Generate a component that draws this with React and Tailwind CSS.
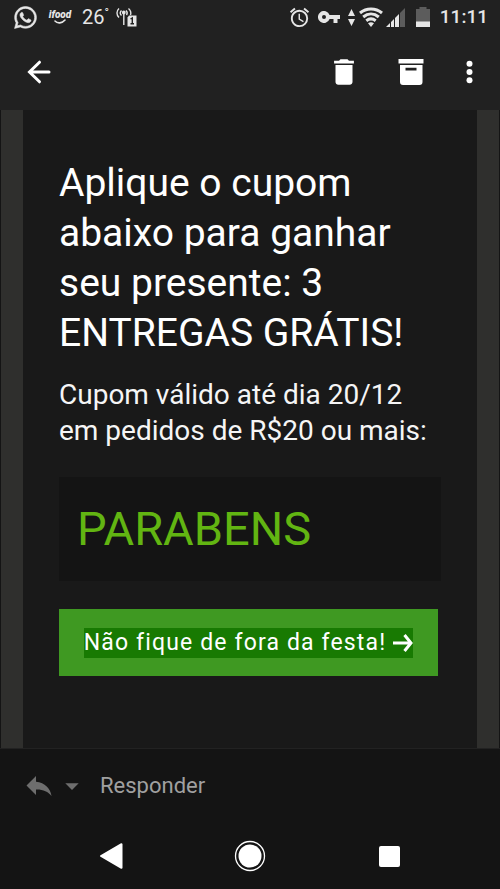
import React from 'react';
import { FaWhatsapp } from 'react-icons/fa';
import { MdAlarm, MdArrowDropDown, MdDelete } from 'react-icons/md';

function StatusBar() {
  return (
    <div className="flex h-9 items-center justify-between pb-[2px] pl-[13px] pr-3 text-[#e6e6e6]">
      <div className="flex items-center gap-[10px]">
        <FaWhatsapp size={25} stroke="currentColor" strokeWidth="12" />
        <div className="flex w-[24px] flex-col items-center">
          <span className="text-[10px] font-black italic leading-[8px]">ifood</span>
          <svg width="12" height="5" viewBox="0 0 12 5" fill="none" stroke="currentColor" strokeWidth="1.600" strokeLinecap="round">
            <path d="M1 2C3.500 4.800 8 4.500 11 1" />
          </svg>
        </div>
        <span className="flex w-[24px] text-[20px] leading-6">26<span className="text-xs leading-4">°</span></span>
        <svg width="21" height="20" viewBox="0 0 21 20" fill="none" stroke="currentColor" strokeWidth="1.400">
          <path d="M3 1.500C0.300 4 0.300 8 3 10.500M5.500 3.500C4 5 4 7 5.500 8.500M12.500 1.500C15.200 4 15.200 6 14.500 8M10 3.500C11.500 5 11.500 6.500 10.500 8M7.800 6V18" />
          <circle cx="7.800" cy="5.500" r="1.200" fill="currentColor" />
          <path d="M13 8.500H20.500V19.500H11.500V10.500Z" fill="currentColor" stroke="none" />
          <path d="M14.500 12L16.300 11V16.500M14.500 16.700H18" stroke="#212121" />
        </svg>
      </div>
      <div className="flex items-center">
        <MdAlarm size={23} className="mr-[7px]" />
        <svg className="mr-2" width="22" height="12" viewBox="0 0 22 12" fill="currentColor">
          <path fillRule="evenodd" d="M11.600 4A6 6 0 1 0 11.600 8H15.500V12H19.500V8H22V4ZM6 4A2 2 0 1 1 6 8A2 2 0 0 1 6 4Z" />
        </svg>
        <svg className="mr-1" width="7" height="17" viewBox="0 0 7 17" fill="currentColor">
          <path d="M3.500 0L7 7H0ZM3.500 17L7 10H0Z" />
        </svg>
        <svg className="mr-[3px]" width="24" height="20" viewBox="0 0 24 20" fill="none" stroke="currentColor" strokeWidth="3">
          <path d="M1 6C7.500 0.500 16.500 0.500 23 6M4.200 10C9 6 15 6 19.800 10M7.300 13.700C10.300 11.400 13.700 11.400 16.700 13.700" />
          <path d="M9 16.200Q12 14.300 15 16.200L12 20Z" fill="currentColor" stroke="none" />
        </svg>
        <svg className="mr-[11px]" width="19" height="19" viewBox="0 0 19 19" fill="currentColor">
          <path d="M0 19L4 15V19ZM5 14L8 11V19H5ZM9 10L13 6V19H9Z" />
          <path d="M14 5L19 0V19H14Z" fill="#5c5c5c" />
        </svg>
        <svg className="mr-[10px]" width="14" height="20" viewBox="0 0 14 20">
          <path d="M3.500 0H10.500V2H14V20H0V2H3.500Z" fill="#5c5c5c" />
          <path d="M0 14.500H14V20H0Z" fill="currentColor" />
        </svg>
        <span className="text-[19px] font-medium leading-6">11:11</span>
      </div>
    </div>
  );
}

function AppBar() {
  return (
    <div className="flex h-[74px] items-center justify-between pb-[2px] pl-[27px] pr-[14px] text-white">
      <button type="button" aria-label="Voltar">
        <svg width="24" height="24" viewBox="0 0 24 24" fill="none" stroke="currentColor" strokeWidth="3" strokeLinecap="round">
          <path d="M12.500 2.200L2.500 12L12.500 21.800M3 12H22" />
        </svg>
      </button>
      <div className="flex items-center">
        <button type="button" aria-label="Excluir" className="mr-[37px]">
          <MdDelete size={34} />
        </button>
        <button type="button" aria-label="Arquivar" className="mr-[29px]">
          <svg width="26" height="26" viewBox="0 0 26 26" fill="currentColor">
            <path d="M0.500 0H25.500V4.500H0.500Z" />
            <path fillRule="evenodd" d="M2 6H24.500V23Q24.500 26 21.500 26H5Q2 26 2 23ZM7.500 8.700V11.500H18.500V8.700Z" />
          </svg>
        </button>
        <button type="button" aria-label="Mais opções">
          <svg width="33" height="26" viewBox="0 0 33 26" fill="currentColor">
            <circle cx="16.500" cy="4.700" r="3" />
            <circle cx="16.500" cy="13" r="3" />
            <circle cx="16.500" cy="21.300" r="3" />
          </svg>
        </button>
      </div>
    </div>
  );
}

function Message() {
  return (
    <main className="mx-px flex grow flex-col bg-[#2f2f2d] px-[22px]">
      <div className="grow bg-[#191919] px-9 pb-[71px] pt-12">
        <h1 className="text-[39px] leading-[50px] text-white">
          Aplique o cupom abaixo para ganhar seu presente: 3 ENTREGAS GRÁTIS!
        </h1>
        <p className="mt-[19px] text-[28px] leading-9 text-[#f5f5f5]">
          Cupom válido até dia 20/12 em pedidos de R$20 ou mais:
        </p>
        <div className="mt-7 bg-[#141414] px-[18px] py-6 text-[47px] leading-[56px] text-[#62b512]">
          PARABENS
        </div>
        <a href="#festa" className="mr-[3px] mt-7 flex h-[67px] items-center justify-center bg-[#3f9922] text-[23px] leading-[30px] tracking-wider text-white">
          <span className="flex items-center gap-[7px] whitespace-nowrap bg-[#187a02]">
            Não fique de fora da festa!
            <svg width="20" height="18" viewBox="0 0 20 18" fill="none" stroke="currentColor" strokeWidth="3">
              <path d="M0 9H18M11.500 1L18 9L11.500 17" />
            </svg>
          </span>
        </a>
      </div>
    </main>
  );
}

function ReplyBar() {
  return (
    <div className="flex h-[75px] items-center border-t border-[#222222] pl-[26px] text-[#6e6e6e]">
      <button type="button" aria-label="Responder ao remetente">
        <svg width="26" height="20" viewBox="0 0 26 20" fill="currentColor">
          <path d="M10 0L0.500 9.500L10 19V13.500C17 13.300 22 15.500 25.500 20C24.500 12.500 19 6.500 10 5.700Z" />
        </svg>
      </button>
      <button type="button" aria-label="Opções de resposta" className="ml-1">
        <MdArrowDropDown size={32} />
      </button>
      <button type="button" className="ml-3 text-[22px] leading-7 text-[#a0a0a0]">Responder</button>
    </div>
  );
}

function NavBar() {
  return (
    <nav className="grid h-[66px] grid-cols-3 justify-items-center px-[41px] text-white">
      <button type="button" aria-label="Voltar à tela anterior">
        <svg width="24" height="28" viewBox="0 0 24 28" fill="currentColor" stroke="currentColor" strokeWidth="2" strokeLinejoin="round">
          <path d="M2 14L22.500 2.200V25.800Z" />
        </svg>
      </button>
      <button type="button" aria-label="Início">
        <svg width="32" height="32" viewBox="0 0 32 32" fill="currentColor">
          <circle cx="16" cy="16" r="14.500" fill="none" stroke="currentColor" strokeWidth="1.300" />
          <circle cx="16" cy="16" r="11.500" />
        </svg>
      </button>
      <button type="button" aria-label="Recentes">
        <span className="block size-[21px] rounded-[2px] bg-white" />
      </button>
    </nav>
  );
}

export default function App() {
  return (
    <div className="flex min-h-screen flex-col bg-[#141414] font-['Roboto',sans-serif]">
      <header className="bg-[#212121]">
        <StatusBar />
        <AppBar />
      </header>
      <Message />
      <footer>
        <ReplyBar />
        <NavBar />
      </footer>
    </div>
  );
}
